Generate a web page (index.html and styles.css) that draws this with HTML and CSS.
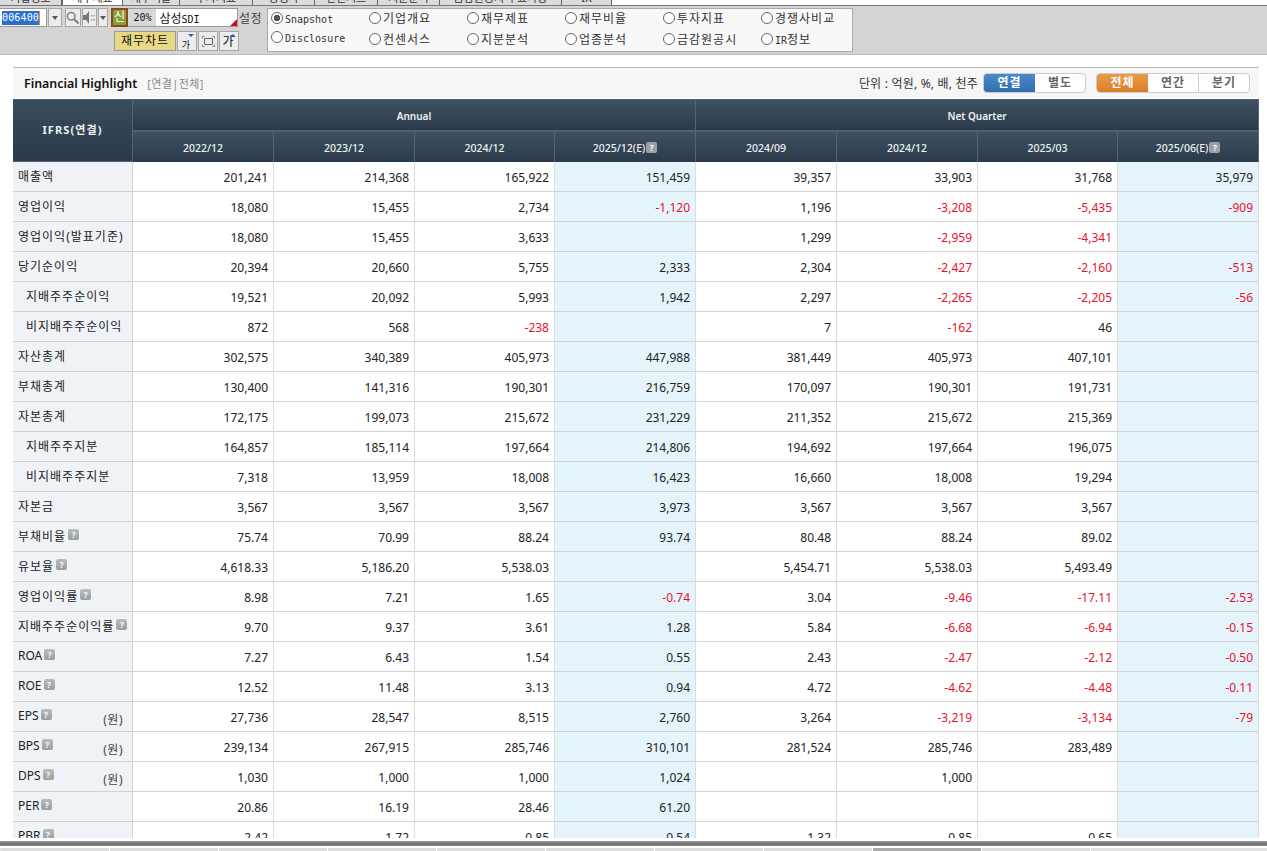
FILE: index.html
```html
<!DOCTYPE html>
<html lang="ko">
<head>
    <meta charset="UTF-8">
    <meta name="viewport" content="width=device-width, initial-scale=1.0">
    <title>Financial Highlight</title>
    <link rel="stylesheet" href="styles.css">
</head>
<body>
    <div class="tabs" id="tabs"></div>

    <div class="toolbar">
        <div class="tools">
            <div class="tool-row">
                <span class="code"><span class="code-sel">006400</span></span>
                <span class="btn btn-drop"><i class="arrow"></i></span>
                <span class="btn btn-icon">
                    <svg width="13" height="13" viewBox="0 0 13 13"><circle cx="5.200" cy="5.200" r="3.800" fill="none" stroke="#808080" stroke-width="1.500"/><path d="M8 8l4.500 4.500" stroke="#808080" stroke-width="2"/></svg>
                </span>
                <span class="btn btn-sound">
                    <svg width="12" height="13" viewBox="0 0 12 13"><path d="M0 4h3l3-4v13l-3-4H0z" fill="#777"/><path d="M8 4h1.500v1.500H8zM8 8h1.500v1.500H8zM10.500 4H12v1.500h-1.500zM10.500 8H12v1.500h-1.500z" fill="#999"/></svg>
                </span>
                <span class="btn btn-drop2"><i class="arrow"></i></span>
                <span class="new-badge">신</span>
                <span class="stock">
                    <span class="pct mono">20%</span>
                    <span class="stock-name">삼성<span class="mono">SDI</span></span>
                </span>
                <span class="setting">설정</span>
            </div>
            <div class="tool-row tool-row-2">
                <span class="chart-btn">재무차트</span>
                <span class="btn btn-small"><span class="ga ga-low">가</span><i class="mini-down"></i></span>
                <span class="btn btn-small">
                    <svg width="13" height="11" viewBox="0 0 13 11"><path d="M2.500 2.500h8v6h-8z" fill="none" stroke="#666"/><path d="M0.500 2.500v-2h2M10.500 0.500h2v2M0.500 8.500v2h2M10.500 10.500h2v-2" fill="none" stroke="#888"/></svg>
                </span>
                <span class="btn btn-small"><span class="ga">가</span><i class="mini-up"></i></span>
            </div>
        </div>
        <div class="menu-box" id="menuBox"></div>
    </div>

    <div class="page">
        <div class="panel">
            <div class="title-bar">
                <div class="title">
                    <strong>Financial Highlight</strong>
                    <span class="title-sub">[연결|전체]</span>
                </div>
                <div class="controls">
                    <span class="unit">단위 : 억원, %, 배, 천주</span>
                    <div class="seg">
                        <span class="seg-item on-blue">연결</span>
                        <span class="seg-item">별도</span>
                    </div>
                    <div class="seg seg-3">
                        <span class="seg-item on-orange">전체</span>
                        <span class="seg-item">연간</span>
                        <span class="seg-item">분기</span>
                    </div>
                </div>
            </div>
            <table class="fin-table">
                <colgroup>
                    <col class="col-label">
                    <col class="col-141"><col class="col-141"><col class="col-140"><col class="col-141">
                    <col class="col-141"><col class="col-141"><col class="col-140"><col class="col-141">
                </colgroup>
                <thead>
                    <tr>
                        <th rowspan="2" class="th-main">IFRS(연결)</th>
                        <th colspan="4" class="th-group">Annual</th>
                        <th colspan="4" class="th-group">Net Quarter</th>
                    </tr>
                    <tr>
                        <th>2022/12</th><th>2023/12</th><th>2024/12</th><th>2025/12(E)<i class="help help-head">?</i></th>
                        <th>2024/09</th><th>2024/12</th><th>2025/03</th><th>2025/06(E)<i class="help help-head">?</i></th>
                    </tr>
                </thead>
                <tbody id="rows"></tbody>
            </table>
        </div>
    </div>

    <div class="bottom-bar"></div>
    <div class="bottom-tabs" id="bottomTabs"></div>

    <script>
        // 상단 탭 (글자는 위쪽이 잘려 있음)
        const tabs = [[62, '기업정보'], [61, '재무제표', true], [57, '재무비율'], [73, '투자지표'], [62, '경쟁사'], [63, '컨센서스'], [62, '지분분석'], [122, '금감원공시 주요사항'], [50, 'IR']];
        tabs.forEach(t => {
            const el = document.createElement('span');
            el.className = 'tab' + (t[2] ? ' tab-on' : '');
            el.style.width = t[0] + 'px';
            el.innerHTML = `<span class="tab-text">${t[1]}</span>`;
            document.getElementById('tabs').appendChild(el);
        });

        const wrapLatin = s => s.replace(/[A-Za-z]+/g, m => `<span class="mono">${m}</span>`);

        const menus = [
            ['Snapshot', '기업개요', '재무제표', '재무비율', '투자지표', '경쟁사비교'],
            ['Disclosure', '컨센서스', '지분분석', '업종분석', '금감원공시', 'IR정보']
        ];
        menus.forEach((row, r) => {
            const rowDiv = document.createElement('div');
            rowDiv.className = 'menu-row';
            row.forEach((name, i) => {
                const on = r === 0 && i === 0;
                rowDiv.innerHTML += `<span class="menu-item"><i class="radio${on ? ' radio-on' : ''}"></i><span>${wrapLatin(name)}</span></span>`;
            });
            document.getElementById('menuBox').appendChild(rowDiv);
        });

        // [이름, 들여쓰기, 도움말, 단위, 값 8개]
        const data = [
            ['매출액', 0, 0, '', '201,241', '214,368', '165,922', '151,459', '39,357', '33,903', '31,768', '35,979'],
            ['영업이익', 0, 0, '', '18,080', '15,455', '2,734', '-1,120', '1,196', '-3,208', '-5,435', '-909'],
            ['영업이익(발표기준)', 0, 0, '', '18,080', '15,455', '3,633', '', '1,299', '-2,959', '-4,341', ''],
            ['당기순이익', 0, 0, '', '20,394', '20,660', '5,755', '2,333', '2,304', '-2,427', '-2,160', '-513'],
            ['지배주주순이익', 1, 0, '', '19,521', '20,092', '5,993', '1,942', '2,297', '-2,265', '-2,205', '-56'],
            ['비지배주주순이익', 1, 0, '', '872', '568', '-238', '', '7', '-162', '46', ''],
            ['자산총계', 0, 0, '', '302,575', '340,389', '405,973', '447,988', '381,449', '405,973', '407,101', ''],
            ['부채총계', 0, 0, '', '130,400', '141,316', '190,301', '216,759', '170,097', '190,301', '191,731', ''],
            ['자본총계', 0, 0, '', '172,175', '199,073', '215,672', '231,229', '211,352', '215,672', '215,369', ''],
            ['지배주주지분', 1, 0, '', '164,857', '185,114', '197,664', '214,806', '194,692', '197,664', '196,075', ''],
            ['비지배주주지분', 1, 0, '', '7,318', '13,959', '18,008', '16,423', '16,660', '18,008', '19,294', ''],
            ['자본금', 0, 0, '', '3,567', '3,567', '3,567', '3,973', '3,567', '3,567', '3,567', ''],
            ['부채비율', 0, 1, '', '75.74', '70.99', '88.24', '93.74', '80.48', '88.24', '89.02', ''],
            ['유보율', 0, 1, '', '4,618.33', '5,186.20', '5,538.03', '', '5,454.71', '5,538.03', '5,493.49', ''],
            ['영업이익률', 0, 1, '', '8.98', '7.21', '1.65', '-0.74', '3.04', '-9.46', '-17.11', '-2.53'],
            ['지배주주순이익률', 0, 1, '', '9.70', '9.37', '3.61', '1.28', '5.84', '-6.68', '-6.94', '-0.15'],
            ['ROA', 0, 1, '', '7.27', '6.43', '1.54', '0.55', '2.43', '-2.47', '-2.12', '-0.50'],
            ['ROE', 0, 1, '', '12.52', '11.48', '3.13', '0.94', '4.72', '-4.62', '-4.48', '-0.11'],
            ['EPS', 0, 1, '(원)', '27,736', '28,547', '8,515', '2,760', '3,264', '-3,219', '-3,134', '-79'],
            ['BPS', 0, 1, '(원)', '239,134', '267,915', '285,746', '310,101', '281,524', '285,746', '283,489', ''],
            ['DPS', 0, 1, '(원)', '1,030', '1,000', '1,000', '1,024', '', '1,000', '', ''],
            ['PER', 0, 1, '', '20.86', '16.19', '28.46', '61.20', '', '', '', ''],
            ['PBR', 0, 1, '', '2.42', '1.72', '0.85', '0.54', '1.32', '0.85', '0.65', '']
        ];
        const rowsEl = document.getElementById('rows');
        data.forEach(row => {
            const tr = document.createElement('tr');
            const latin = /^[A-Z]+$/.test(row[0]);
            let html = `<th class="row-head${row[1] ? ' indent' : ''}"><span class="row-name${latin ? ' row-latin' : ''}">${row[0]}${row[2] ? '<i class="help">?</i>' : ''}</span>${row[3] ? `<span class="row-unit">${row[3]}</span>` : ''}</th>`;
            row.slice(4).forEach((v, i) => {
                const cls = [];
                if (i === 3 || i === 7) cls.push('est');
                if (v.startsWith('-')) cls.push('neg');
                html += `<td class="${cls.join(' ')}">${v}</td>`;
            });
            tr.innerHTML = html;
            rowsEl.appendChild(tr);
        });

        for (let i = 0; i < 10; i++) {
            const el = document.createElement('span');
            el.className = 'btab' + (i === 8 ? ' btab-on' : '');
            document.getElementById('bottomTabs').appendChild(el);
        }
    </script>
</body>
</html>
```

FILE: styles.css
```css
* {
    box-sizing: border-box;
}
html, body {
    height: 100%;
}
body {
    margin: 0;
    width: 1267px;
    height: 851px;
    overflow: hidden;
    display: flex;
    flex-direction: column;
    background: #fff;
    color: #111;
    font-family: "Noto Sans", "Noto Sans CJK KR", sans-serif;
    font-size: 12px;
}
i {
    font-style: normal;
}
.mono {
    font-family: "DejaVu Sans Mono", monospace;
    font-size: 10px;
    letter-spacing: 0;
}

/* top tabs */
.tabs {
    height: 6px;
    flex: none;
    display: flex;
    overflow: hidden;
    background: #fff;
    border-bottom: 1px solid #777;
}
.tab {
    flex: none;
    height: 5px;
    overflow: hidden;
    font-size: 11px;
    text-align: center;
    background: #dcdcdc;
    color: #333;
    border-right: 1px solid #666;
}
.tab-text {
    display: block;
    margin-top: -3px;
    line-height: 2px;
}
.tab-on {
    background: #fff;
    border-left: 1px solid #666;
}

/* toolbar */
.toolbar {
    height: 49px;
    flex: none;
    display: flex;
    gap: 5px;
    padding-top: 2px;
    background: #d4d4d4;
    border-bottom: 1px solid #bbb;
}
.tools {
    width: 262px;
    flex: none;
}
.tool-row {
    display: flex;
    align-items: center;
    height: 19px;
}
.tool-row-2 {
    justify-content: flex-end;
    margin-top: 4px;
    gap: 1px;
    height: 20px;
    padding-right: 23px;
}
.code {
    width: 47px;
    height: 19px;
    background: #fff;
    border: 1px solid #999;
    border-left: 0;
    padding: 2px 0 0 2px;
    line-height: 14px;
    font-family: "DejaVu Sans Mono", monospace;
    font-size: 10px;
    letter-spacing: 0.150px;
}
.code-sel {
    background: #2a6fd0;
    color: #fff;
    display: inline-block;
    height: 14px;
    border-right: 1px solid #e88a2a;
}
.btn {
    display: inline-flex;
    align-items: center;
    justify-content: center;
    position: relative;
    height: 19px;
    background: #ececec;
    border: 1px solid #a5a5a5;
}
.btn-drop {
    width: 14px;
    margin-left: 1px;
}
.btn-icon {
    width: 16px;
    margin-left: 3px;
}
.btn-sound {
    width: 15px;
    margin-left: 1px;
}
.btn-drop2 {
    width: 10px;
    margin-left: 1px;
}
.btn-small {
    width: 20px;
    height: 20px;
}
.arrow {
    width: 0;
    height: 0;
    border-left: 3px solid transparent;
    border-right: 3px solid transparent;
    border-top: 4px solid #555;
}
.new-badge {
    width: 18px;
    height: 19px;
    margin-left: 3px;
    background: #8a9d3c;
    border: 2px solid #8a4b14;
    color: #fff;
    font-size: 12px;
    line-height: 14px;
    text-align: center;
}
.stock {
    width: 110px;
    height: 19px;
    display: flex;
    align-items: center;
    position: relative;
    background: #fff;
    border: 1px solid #999;
    border-left: 0;
}
.stock::after {
    content: "";
    position: absolute;
    right: 0;
    bottom: 0;
    border-left: 7px solid transparent;
    border-bottom: 7px solid #c8102e;
}
.pct {
    width: 28px;
    height: 17px;
    background: #d8d8d8;
    text-align: center;
    line-height: 17px;
}
.stock-name {
    padding-left: 3px;
}
.setting {
    margin-left: 1px;
    white-space: nowrap;
    color: #444;
    letter-spacing: 0.500px;
}
.chart-btn {
    width: 62px;
    height: 20px;
    background: #e8d987;
    border: 1px solid #999;
    text-align: center;
    line-height: 18px;
    letter-spacing: 1px;
}
.ga {
    font-size: 12px;
    line-height: 1;
    margin-left: -2px;
    margin-top: 1px;
}
.ga-low {
    font-size: 9px;
    margin-top: 6px;
}
.mini-down, .mini-up {
    position: absolute;
    right: 2px;
    top: 2px;
    border-left: 3px solid transparent;
    border-right: 3px solid transparent;
}
.mini-down {
    border-top: 3px solid #2a5ea8;
}
.mini-up {
    border-bottom: 3px solid #2a5ea8;
}

.menu-box {
    width: 586px;
    height: 44px;
    flex: none;
    background: #f8f8f8;
    border: 1px solid #aaa;
}
.menu-row {
    display: flex;
    height: 18px;
    padding-left: 3px;
}
.menu-row + .menu-row {
    margin-top: 3px;
}
.menu-row + .menu-row .menu-item:first-child {
    margin-top: -4px;
}
.menu-item {
    width: 98px;
    flex: none;
    display: flex;
    align-items: center;
    gap: 2px;
    color: #333;
    letter-spacing: 1px;
    white-space: nowrap;
}
.radio {
    width: 12px;
    height: 12px;
    flex: none;
    border: 1px solid #666;
    border-radius: 50%;
    background: #fff;
}
.radio-on {
    background: radial-gradient(circle, #555 3px, #fff 3.500px);
}

/* main panel */
.page {
    flex: 1;
    min-height: 0;
    padding: 12px 8px 0 13px;
    overflow: hidden;
}
.panel {
    height: 771px;
    overflow: hidden;
    border-top: 1px solid #bbb;
}
.title-bar {
    height: 31px;
    display: flex;
    align-items: center;
    justify-content: space-between;
    padding: 0 9px 0 11px;
    background: #f6f6f6;
    border-bottom: 1px solid #fff;
}
.title strong {
    font-size: 12.400px;
    font-weight: 600;
    color: #111;
}
.title-sub {
    margin-left: 7px;
    font-size: 11px;
    letter-spacing: 0.400px;
    color: #888;
}
.controls {
    display: flex;
    align-items: center;
}
.unit {
    margin-right: 5px;
    font-size: 12px;
    letter-spacing: 0.200px;
    color: #333;
}
.seg {
    display: flex;
    width: 103px;
    height: 20px;
    background: #fff;
    border: 1px solid #ccc;
    border-radius: 4px;
    overflow: hidden;
}
.seg-3 {
    width: 154px;
    margin-left: 10px;
}
.seg-item {
    flex: 1;
    text-align: center;
    line-height: 17px;
    font-weight: 700;
    font-size: 12px;
    letter-spacing: 1px;
    color: #666;
    border-right: 1px solid #ccc;
}
.seg-item:last-child {
    border-right: 0;
}
.on-blue, .on-orange {
    flex: none;
    width: 51px;
    color: #fff;
    border: 0;
}
.on-blue {
    background: linear-gradient(#4a8ac8, #2f6fae);
}
.on-orange {
    background: linear-gradient(#ea9a4c, #d97e28);
}

/* table */
.fin-table {
    width: 1246px;
    table-layout: fixed;
    border-collapse: separate;
    border-spacing: 0;
}
.col-label {
    width: 120px;
}
.col-141 {
    width: 141px;
}
.col-140 {
    width: 140px;
}
thead th {
    height: 31px;
    padding: 2px 0 0;
    font-size: 10.500px;
    font-weight: 500;
    color: #eef2f5;
    background: linear-gradient(#3f5162, #2a3a4a);
    border-right: 1px solid #566574;
    border-top: 1px solid #4b5c6c;
    text-align: center;
}
thead tr:first-child th {
    border-bottom: 1px solid #566574;
    height: 32px;
}
thead .th-main {
    padding: 0 0 3px;
    font-size: 11px;
    font-weight: 700;
    letter-spacing: 1.100px;
    background: linear-gradient(#3a4b5c, #2a3a4a);
}
thead .th-group {
    font-size: 10px;
    font-weight: 600;
}
tbody th, tbody td {
    height: 30px;
    padding: 0 5px 0 0;
    border-bottom: 1px solid #d2d2d2;
    border-right: 1px solid #dcdcdc;
    font-weight: 400;
    white-space: nowrap;
}
tbody td {
    padding-top: 2px;
    text-align: right;
    color: #222;
    font-size: 12px;
}
tbody .row-head {
    position: relative;
    background: #eff2f7;
    padding: 0 10px 2px 5px;
    text-align: left;
    color: #222;
    border-right: 1px solid #d2d2d2;
    letter-spacing: 1px;
}
tbody .row-head.indent {
    padding-left: 13px;
}
.row-name {
    display: inline-flex;
    align-items: center;
}
.row-latin {
    letter-spacing: 0;
}
.row-unit {
    position: absolute;
    right: 9px;
    top: 8px;
    color: #444;
    font-size: 12px;
    letter-spacing: 0.500px;
}
.est {
    background: #e4f4fa;
}
.neg {
    color: #e8112d;
}
.help {
    display: inline-block;
    width: 11px;
    height: 11px;
    margin-left: 2px;
    margin-bottom: 2px;
    border-radius: 2px;
    background: linear-gradient(#bcbcbc, #9c9c9c);
    color: #fff;
    font-size: 8px;
    font-weight: 700;
    letter-spacing: 0;
    line-height: 11px;
    text-align: center;
}
.help-head {
    margin-left: 1px;
    vertical-align: 1px;
    background: #9aa0a6;
}

/* bottom */
.bottom-bar {
    height: 5px;
    flex: none;
    margin-top: 3px;
    background: linear-gradient(#9a9a9a, #6f6f6f 60%, #8f8f8f);
}
.bottom-tabs {
    height: 3px;
    flex: none;
    margin-top: 2px;
    padding-left: 1px;
    display: flex;
    background: #e2e2e2;
}
.btab {
    width: 109px;
    flex: none;
    border-right: 1px solid #fff;
    background: #dedede;
}
.btab-on {
    background: #aaa;
}
```
